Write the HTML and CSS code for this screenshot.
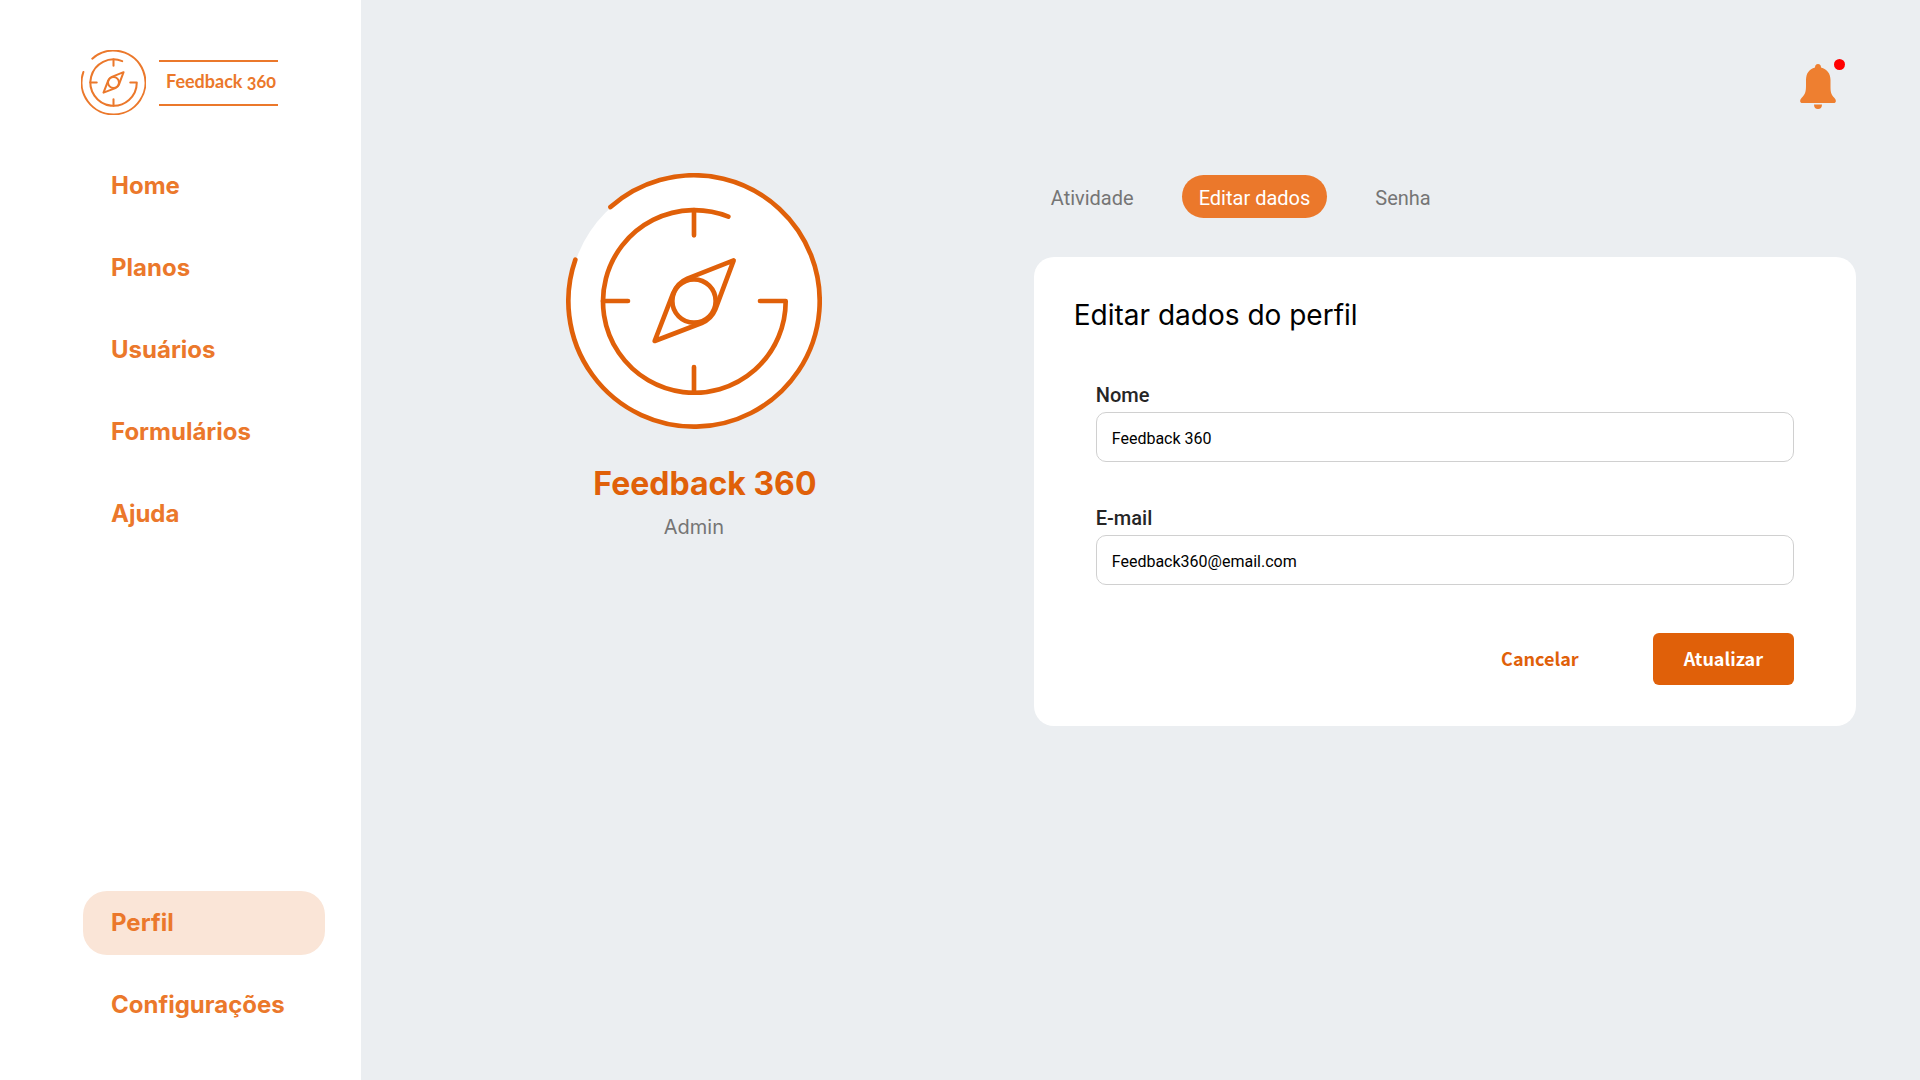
FILE: index.html
```html
<!DOCTYPE html>
<html lang="pt-BR">
<head>
<meta charset="utf-8">
<meta name="viewport" content="width=device-width, initial-scale=1">
<title>Feedback 360</title>
<link rel="stylesheet" href="styles.css">
</head>
<body>
<svg class="sprite" aria-hidden="true">
  <symbol id="compass" viewBox="46 38 768 768">
    <path d="M179.400 140.300A377 377 0 1 1 74 298"/>
    <path d="M533 169A274 274 0 1 0 705 422H628"/>
    <path d="M430 149V225M157 422H232M430 620V696"/>
    <path d="M549 300L410 355Q380 368 367 400L312 542L453 488Q482 476 494 447Z"/>
    <circle cx="430" cy="422" r="65"/>
  </symbol>
</svg>
<div class="app">
  <aside class="sidebar">
    <a class="brand" href="#">
      <svg class="brand-mark" aria-hidden="true"><use href="#compass"/></svg>
      <span class="brand-name">Feedback 360</span>
    </a>
    <nav class="nav">
      <a class="nav-item" href="#">Home</a>
      <a class="nav-item" href="#">Planos</a>
      <a class="nav-item" href="#">Usuários</a>
      <a class="nav-item" href="#">Formulários</a>
      <a class="nav-item" href="#">Ajuda</a>
    </nav>
    <nav class="nav nav-bottom">
      <a class="nav-item active" href="#" aria-current="page">Perfil</a>
      <a class="nav-item" href="#">Configurações</a>
    </nav>
  </aside>
  <main class="main">
    <header class="topbar">
      <button class="bell" type="button" aria-label="Notificações">
        <svg viewBox="0 0 36 45" width="36" height="45" aria-hidden="true">
          <path d="M18 0C20 0 21 1.500 21 3.500C27 5 30.500 9.500 30.500 16V22C30.500 28 31 30.500 34.500 34C36.700 36.300 36.200 39 33.500 39H2.500C-.2 39-.7 36.300 1.500 34C5 30.500 6 28 6 22V16C6 9.500 9 5 15 3.500C15 1.500 16 0 18 0ZM14 40.500H22C22 43.500 20.500 45 18 45S14 43.500 14 40.500Z"/>
        </svg>
        <span class="bell-dot"></span>
      </button>
    </header>
    <div class="content">
      <section class="profile">
        <svg class="avatar" viewBox="0 0 256 256" aria-hidden="true">
          <circle class="avatar-disc" cx="128" cy="128" r="125"/>
          <use href="#compass" width="256" height="256"/>
        </svg>
        <h1 class="profile-name">Feedback 360</h1>
        <p class="profile-role">Admin</p>
      </section>
      <section class="settings">
        <div class="tabs">
          <button class="tab" type="button">Atividade</button>
          <button class="tab selected" type="button">Editar dados</button>
          <button class="tab" type="button">Senha</button>
        </div>
        <form class="card">
          <h2 class="card-title">Editar dados do perfil</h2>
          <div class="fields">
            <div class="field">
              <label for="nome">Nome</label>
              <input id="nome" type="text" value="Feedback 360">
            </div>
            <div class="field">
              <label for="email">E-mail</label>
              <input id="email" type="email" value="Feedback360@email.com">
            </div>
            <div class="actions">
              <button class="btn" type="button">Cancelar</button>
              <button class="btn primary" type="submit">Atualizar</button>
            </div>
          </div>
        </form>
      </section>
    </div>
  </main>
</div>
</body>
</html>
```
FILE: styles.css
```css
* { box-sizing: border-box; }
body { margin: 0; background: #ebeef1; font-family: Inter, sans-serif; }
button, input { font: inherit; }
button { border: 0; background: none; cursor: pointer; }
h1, h2, p { margin: 0; }
a { text-decoration: none; }
.sprite { display: none; }
.app { display: flex; min-height: 100vh; }

.sidebar {
  flex: none;
  width: 361px;
  display: flex;
  flex-direction: column;
  padding: 50px 36px 43px 81px;
  background: #fff;
}
.brand { display: flex; align-items: center; gap: 13px; margin-bottom: 39px; color: #eb782b; }
.brand-mark { width: 65px; height: 65px; fill: none; stroke: currentColor; stroke-width: 24; stroke-linecap: round; stroke-linejoin: round; }
.brand-name {
  padding: 0 2px 4px 7px;
  border: solid currentColor;
  border-width: 2px 0;
  font: 700 18px/38px Lato, sans-serif;
  font-variant-numeric: oldstyle-nums;
}
.nav { display: flex; flex-direction: column; gap: 18px; padding-left: 2px; }
.nav-bottom { margin-top: auto; }
.nav-item { padding: 0 28px; border-radius: 24px; color: #eb782b; font-size: 24px; font-weight: 700; line-height: 64px; }
.nav-item.active { background: #fae5d7; }

.main { flex: 1; min-width: 0; padding-right: 64px; }
.topbar { display: flex; justify-content: flex-end; height: 173px; padding: 64px 20px 0 0; }
.bell { position: relative; width: 36px; height: 45px; padding: 0; fill: #ee7f30; }
.bell svg { display: block; }
.bell-dot { position: absolute; top: -5px; right: -9px; width: 11px; height: 11px; border-radius: 50%; background: #f00; }

.content { display: grid; grid-template-columns: minmax(0, 9fr) minmax(0, 11fr); }
.profile { display: flex; flex-direction: column; align-items: center; padding-right: 7px; }
.avatar {
  width: 256px;
  height: 256px;
  fill: none;
  stroke: #e06009;
  stroke-width: 14;
  stroke-linecap: round;
  stroke-linejoin: round;
}
.avatar-disc { fill: #fff; stroke: none; }
.profile-name { margin-top: 35px; padding-left: 22px; color: #e06009; font-size: 32px; line-height: 40px; }
.profile-role { margin-top: 11px; color: #757575; font-size: 20px; line-height: 24px; }

.settings { padding-top: 2px; }
.tabs { display: flex; gap: 31px; margin-bottom: 39px; }
.tab { padding: 3px 17px 0; border-radius: 22px; color: #757575; font: 400 20px/40px Roboto, sans-serif; }
.tab.selected { background: #eb782b; color: #fff; }

.card { padding: 40px 62px 41px; border-radius: 20px; background: #fff; }
.card-title { margin: 0 0 50px -22px; font-size: 28px; font-weight: 400; line-height: 36px; }
.fields { display: flex; flex-direction: column; gap: 44px; }
.field { display: flex; flex-direction: column; gap: 5px; }
.field label { color: #262626; font: 500 20px/24px Roboto, sans-serif; }
.field input {
  width: 100%;
  height: 50px;
  padding: 2px 15px 0;
  border: 1px solid #d0d0d0;
  border-radius: 10px;
  background: #fff;
  color: #000;
  font: 400 16px/24px Roboto, sans-serif;
}
.actions { display: flex; justify-content: flex-end; gap: 43px; margin-top: 4px; }
.btn { padding: 0 31px 2px; border-radius: 6px; color: #e06009; font: 700 18px/50px "Noto Sans CJK JP", sans-serif; }
.btn.primary { background: #e06009; color: #fff; }
```
